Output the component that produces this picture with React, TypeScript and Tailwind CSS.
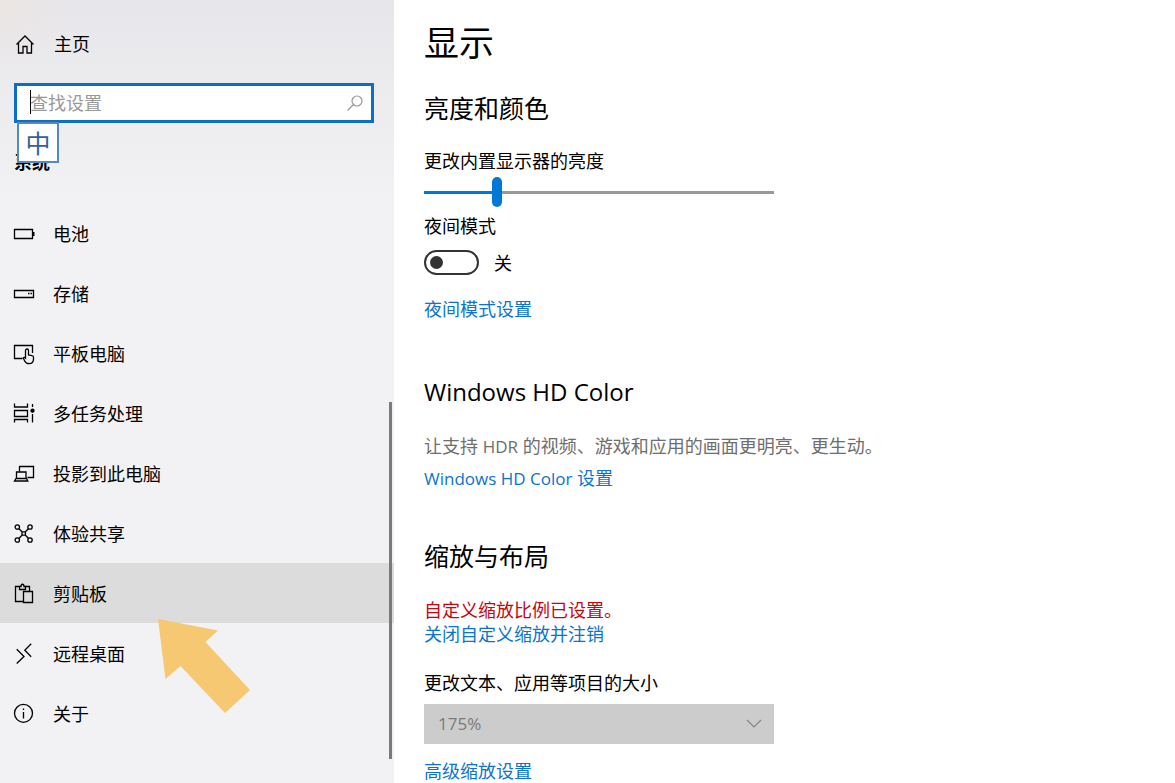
import React, { useState } from 'react';

const navItems = [
  {
    label: '电池',
    icon: (
      <>
        <path d="M2.5 8.5h18v9h-18z" />
        <path d="M21.5 11v4" strokeWidth="2" />
      </>
    ),
  },
  {
    label: '存储',
    icon: (
      <>
        <path d="M2.5 9.5h19v7h-19z" />
        <path d="M16 12.5h1.5M18.5 12.5h1.5" />
      </>
    ),
  },
  {
    label: '平板电脑',
    icon: (
      <>
        <path d="M10.5 17.5h-8v-13h18v7.5" />
        <path d="M13.5 17V9.5a1.5 1.5 0 0 1 3 0V14l3.5.6a1.7 1.7 0 0 1 1.5 1.7V18c0 3-1.8 4.7-4.5 4.7-2.2 0-3.5-1-4.3-2.7l-1.5-3.1c.8-.9 1.6-.6 2.3.1z" />
      </>
    ),
  },
  {
    label: '多任务处理',
    icon: (
      <>
        <path d="M2.5 2.5V6h13V2.5M2.5 9.5h13v6h-13zM2.5 21.5v-3h13v3" />
        <path d="M20.5 3v3M20.5 13v8.5" />
        <circle cx="20.5" cy="9.7" r="1.5" fill="currentColor" />
      </>
    ),
  },
  {
    label: '投影到此电脑',
    icon: (
      <>
        <path d="M7.5 10.5v-5h14v11h-6" />
        <path d="M4.5 17.5V11H14v6.5M4 17.5h10.5l1.3 2.5H2.5z" />
      </>
    ),
  },
  {
    label: '体验共享',
    icon: (
      <>
        <circle cx="5.3" cy="6" r="2.2" />
        <circle cx="18" cy="6" r="2.2" />
        <circle cx="5.3" cy="19" r="2.2" />
        <circle cx="18" cy="19" r="2.2" />
        <path d="M7 7.7l3 3M16.4 7.7l-3 3M7 17.3l3-3M16.4 17.3l-3-3M10 10.8h3.4v3.4H10z" />
      </>
    ),
  },
  {
    label: '剪贴板',
    active: true,
    icon: (
      <>
        <path d="M11.5 20.5h-8v-15h4M13.5 5.5h4V10" />
        <path d="M7.5 8.5v-3H9c0-3 3-3 3 0h1.5v3z" />
        <path d="M11.5 10.5h9v11h-9z" />
      </>
    ),
  },
  {
    label: '远程桌面',
    icon: <path d="M4.7 8.3l7.3 7.2-7.3 7M19.2 2.8l-6.4 6.5 6.4 6.4" />,
  },
  {
    label: '关于',
    icon: (
      <>
        <circle cx="11.5" cy="12.3" r="9" />
        <path d="M11.5 11v6.5M11.5 7.5V9" />
      </>
    ),
  },
];

function Icon({ children }: { children: React.ReactNode }) {
  return (
    <svg className="h-6 w-6 shrink-0" viewBox="0 0 24 24" fill="none" stroke="currentColor" strokeWidth="1.3" aria-hidden="true">
      {children}
    </svg>
  );
}

function Sidebar() {
  return (
    <aside className="relative w-[394px] shrink-0 bg-[#f2f2f4] bg-[radial-gradient(circle_at_0_0,#ece6e4_0,transparent_70px),linear-gradient(to_bottom,#e7e6ea_0,#eae9ec_60px,#f2f2f4_200px)]">
      <a href="#home" className="flex h-[59px] items-center gap-[18px] pt-[29px] pl-3">
        <Icon>
          <path d="M4.5 12.5L13 4l8.5 8.5M6.5 11v10H11v-6.5h4V21h4.5V11" />
        </Icon>
        主页
      </a>

      <div className="relative mt-6 mr-5 ml-[14px]">
        <input
          type="text"
          aria-label="查找设置"
          placeholder="查找设置"
          className="block h-10 w-full border-[3px] border-[#0b6fc6] bg-white pr-10 pl-[13px] outline-none placeholder:text-[#999]"
        />
        <span className="absolute top-[7px] left-4 h-6 w-px bg-black" />
        <svg className="absolute top-3 right-[11px] h-4 w-4" viewBox="0 0 16 16" fill="none" stroke="#999" strokeWidth="1.2" aria-hidden="true">
          <circle cx="10" cy="6" r="5" />
          <path d="M6.5 9.5l-6 6" />
        </svg>
        {/* input method badge, hangs over the heading below */}
        <div className="absolute top-[39px] left-[3px] z-10 flex h-[41px] w-[42px] items-center justify-center border-2 border-[#5589c4] bg-white text-[25px] text-[#33619c]">
          中
        </div>
      </div>

      <h2 className="mt-[27px] ml-[14px] leading-6 font-bold">系统</h2>

      <nav className="mt-[29px]">
        {navItems.map((item) => (
          <a
            key={item.label}
            href="#"
            className={`flex h-[60px] items-center gap-[17px] pl-3 ${item.active ? 'bg-[#dcdcdd]' : ''}`}
          >
            <Icon>{item.icon}</Icon>
            <span className="pt-0.5">{item.label}</span>
          </a>
        ))}
      </nav>

      <div className="absolute top-[402px] right-[2px] bottom-6 w-[3px] bg-[#7a7a7a]" />
      <svg className="absolute top-[618px] left-[158px] h-[96px] w-[93px]" viewBox="0 0 93 96" aria-hidden="true">
        <path d="M0 1L60 12.5 47.5 24 92 72 67 95 22.5 48 7.5 61z" fill="#f5c871" />
      </svg>
    </aside>
  );
}

function BrightnessSlider() {
  const [value, setValue] = useState(20);
  return (
    <input
      id="brightness"
      type="range"
      value={value}
      onChange={(e) => setValue(Number(e.target.value))}
      className="mt-1 block h-[30px] w-full appearance-none bg-[length:100%_3px] bg-center bg-no-repeat [&::-webkit-slider-thumb]:h-[30px] [&::-webkit-slider-thumb]:w-[10px] [&::-webkit-slider-thumb]:appearance-none [&::-webkit-slider-thumb]:rounded-full [&::-webkit-slider-thumb]:bg-[#0078d7]"
      style={{ backgroundImage: `linear-gradient(to right, #0078d7 ${value}%, #999 ${value}%)` }}
    />
  );
}

export default function App() {
  return (
    <div className="flex h-screen overflow-hidden bg-white font-['Open_Sans','Noto_Sans_CJK_SC',sans-serif] text-[18px] leading-6 text-black">
      <Sidebar />

      <main className="min-w-0 flex-1 pt-[19px] pl-[30px]">
        <h1 className="text-[35px] leading-[48px]">显示</h1>

        <section className="mt-[25px] w-[350px]">
          <h2 className="text-[25px] leading-8">亮度和颜色</h2>
          <label htmlFor="brightness" className="mt-[25px] block">
            更改内置显示器的亮度
          </label>
          <BrightnessSlider />
          <label htmlFor="night" className="mt-[7px] block">
            夜间模式
          </label>
          <div className="mt-3 flex h-[25px] items-center gap-[15px]">
            <input
              id="night"
              type="checkbox"
              role="switch"
              className="flex h-[25px] w-[55px] appearance-none items-center rounded-full border-2 border-[#333] pl-1 before:h-[13px] before:w-[13px] before:rounded-full before:bg-[#333] checked:justify-end checked:pr-1"
            />
            <span>关</span>
          </div>
          <a href="#night" className="mt-[22px] block text-[#0b74cf]">
            夜间模式设置
          </a>
        </section>

        <section className="mt-[55px]">
          <h2 className="text-2xl leading-8">Windows HD Color</h2>
          <p className="mt-[26px] text-[#6e6e6e]">
            让支持 <span className="text-[17px]">HDR</span> 的视频、游戏和应用的画面更明亮、更生动。
          </p>
          <a href="#hd" className="mt-[7px] block text-[#0b74cf]">
            <span className="text-[17px]">Windows HD Color</span> 设置
          </a>
        </section>

        <section className="mt-[49px] w-[350px]">
          <h2 className="text-[25px] leading-8">缩放与布局</h2>
          <p className="mt-[26px] text-[#c50510]">自定义缩放比例已设置。</p>
          <a href="#reset" className="block text-[#0b74cf]">
            关闭自定义缩放并注销
          </a>
          <label htmlFor="scale" className="mt-[25px] block">
            更改文本、应用等项目的大小
          </label>
          <div className="relative mt-[9px]">
            <select
              id="scale"
              disabled
              className="block h-10 w-full appearance-none bg-[#ccc] pl-[14px] text-[17px] text-[#7a7a7a] opacity-100"
            >
              <option>175%</option>
            </select>
            <svg className="absolute top-[15px] right-3 h-[10px] w-4" viewBox="0 0 16 10" fill="none" stroke="#858585" strokeWidth="1.2" aria-hidden="true">
              <path d="M1 1l7 7 7-7" />
            </svg>
          </div>
          <a href="#advanced" className="mt-[15px] block text-[#0b74cf]">
            高级缩放设置
          </a>
        </section>
      </main>
    </div>
  );
}
